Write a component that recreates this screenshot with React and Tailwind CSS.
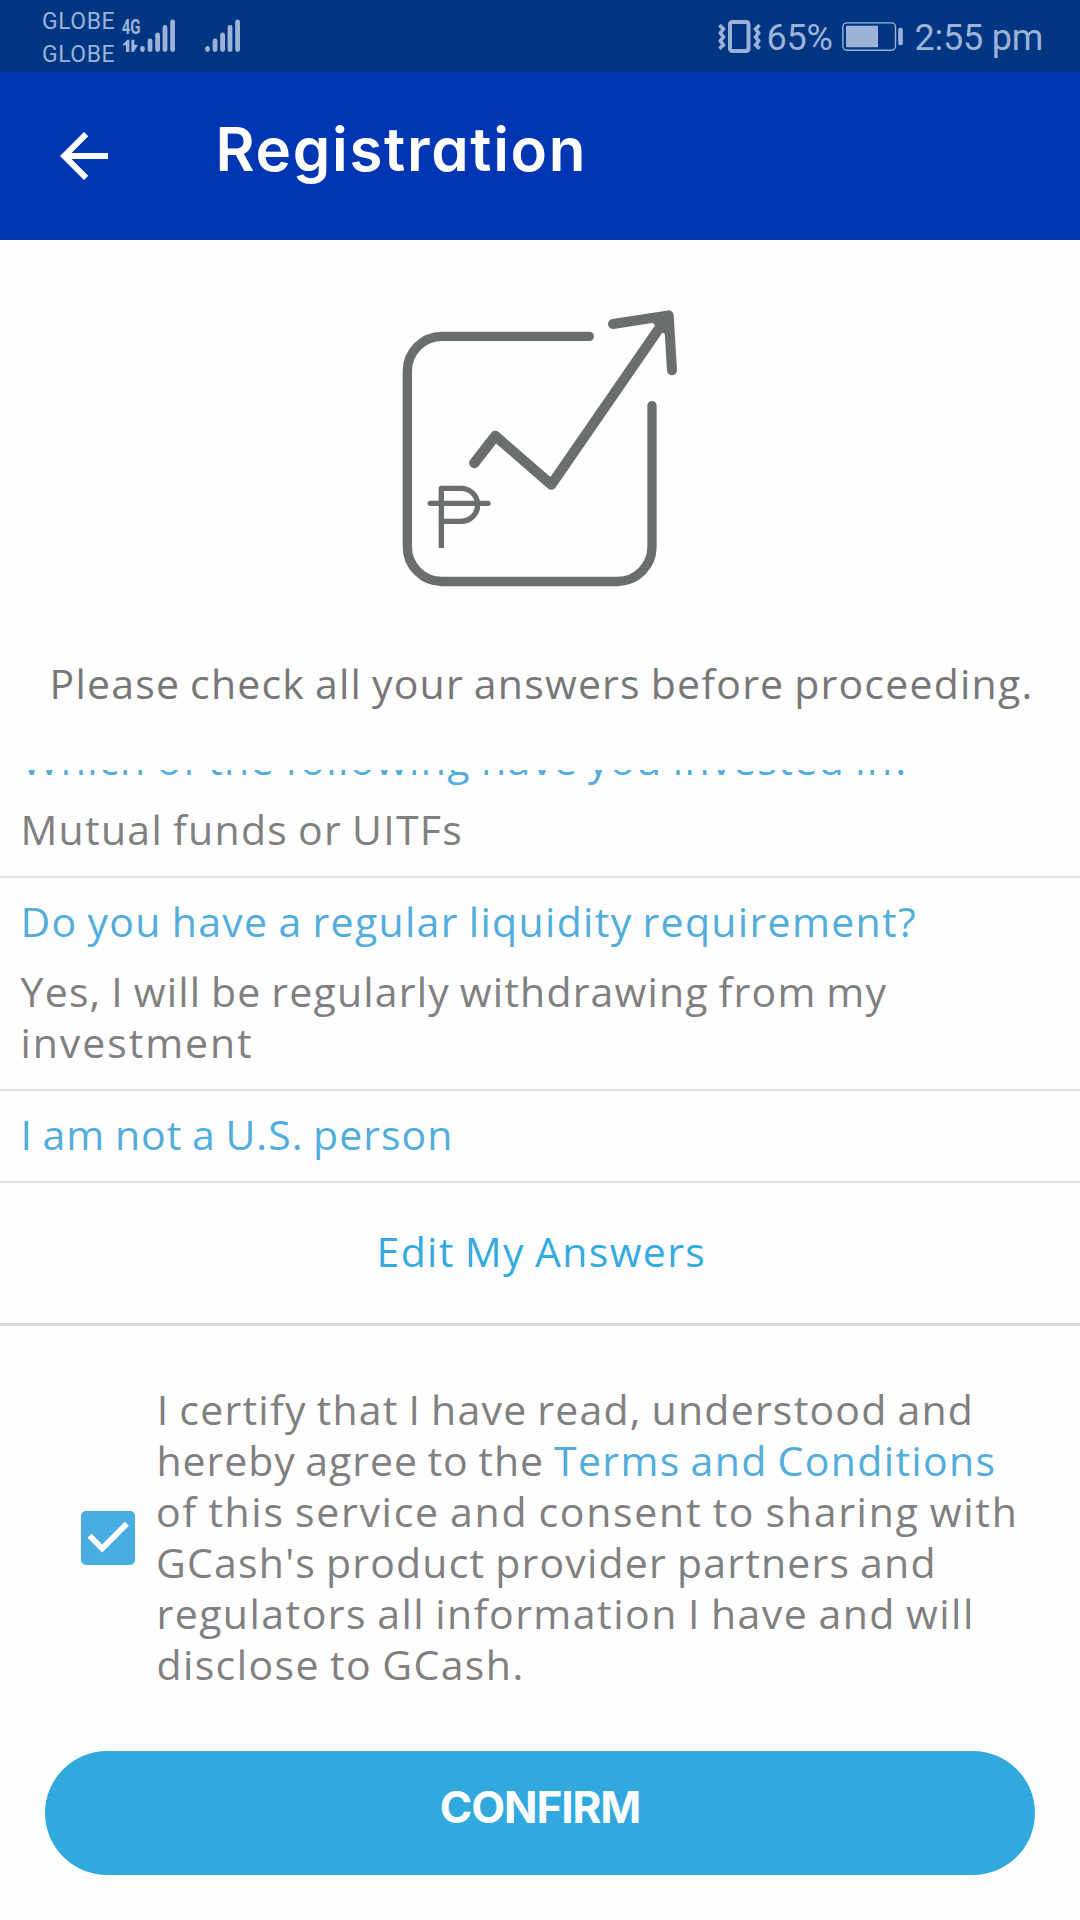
const body = "font-['Open_Sans',sans-serif] text-[41px] leading-[51px] whitespace-nowrap [word-spacing:-2px]";

function SignalBars({ className }) {
  return (
    <svg className={className} width="35" height="34" viewBox="0 0 35 34" fill="none" stroke="#9cb3d7" strokeWidth="4.8" strokeLinecap="round">
      <path d="M2.5 29.4V30.6M10 21.9V30.6M17.6 15.9V30.6M25 8.4V30.6M32.6 2.9V30.6" />
    </svg>
  );
}

function NetworkType() {
  return (
    <svg className="overflow-visible" width="19" height="34" viewBox="0 0 19 34" fill="#9cb3d7">
      <text x="-0.3" y="14.6" fontFamily="Roboto, sans-serif" fontWeight="700" fontSize="20" textLength="18.8" lengthAdjust="spacingAndGlyphs">4G</text>
      <path d="M0 26.3L5.4 20.8H7.4V33H4V26.3Z" />
      <path d="M9.4 20.8H12.4V26H16L11.6 33H9.4Z" />
    </svg>
  );
}

function StatusBar() {
  return (
    <div className="flex h-[72px] bg-[#003581] font-['Roboto',sans-serif] text-[#9cb3d7]">
      <div className="ml-[42px] mt-[5px] w-[80px] text-[23px] leading-[33px] tracking-[0.5px]">
        <div>GLOBE</div>
        <div>GLOBE</div>
      </div>
      <div className="mt-[19px] flex items-start">
        <NetworkType />
        <SignalBars className="-ml-px" />
        <SignalBars className="ml-[30px]" />
      </div>
      <div className="ml-auto mr-[36px] mt-[17px] flex items-start text-[36px] leading-[42px] tracking-[-0.22px] whitespace-nowrap">
        <svg className="mr-[6px] mt-[3px]" width="43" height="34" viewBox="0 0 43 34" fill="none" stroke="#9cb3d7" strokeWidth="4">
          <rect x="12" y="2" width="18.5" height="29" rx="2.2" />
          <path strokeWidth="3.6" d="M1.4 5L5.4 9L2.4 13L5.4 17L2.4 21L5.4 25L1.4 28.6M41.6 5L37.6 9L40.6 13L37.6 17L40.6 21L37.6 25L41.6 28.6" />
        </svg>
        <span className="w-[75.5px]">65%</span>
        <svg className="mr-[11.5px] mt-[5px]" width="61" height="30" viewBox="0 0 61 30" fill="#9cb3d7">
          <rect x="0.9" y="0.9" width="52.6" height="27.4" rx="4" fill="none" stroke="#9cb3d7" strokeWidth="1.4" />
          <rect x="4" y="3.8" width="32" height="21.4" rx="1" />
          <rect x="56.2" y="5.8" width="4.6" height="17.4" rx="2" />
        </svg>
        <span className="w-[129.5px]">2:55 pm</span>
      </div>
    </div>
  );
}

function Header() {
  return (
    <header className="flex h-[168px] bg-[#0036b3] text-white">
      <svg className="ml-[48px] mt-[48px]" width="72" height="72" viewBox="0 0 24 24" fill="currentColor">
        <path d="M20 11H7.83l5.59-5.59L12 4l-8 8 8 8 1.41-1.41L7.83 13H20v-2z" />
      </svg>
      <h1 className="ml-[95.5px] mt-[47px] font-['Inter',sans-serif] text-[60px] font-semibold leading-[60px] tracking-[1.7px] [font-feature-settings:'cv11']">
        Registration
      </h1>
    </header>
  );
}

function GrowthIcon() {
  return (
    <svg width="320" height="320" viewBox="0 0 960 960" fill="none" stroke="#6a6e6d" strokeWidth="28" strokeLinecap="round" strokeLinejoin="round">
      <path d="M628 139H186A104 104 0 0 0 82 243V770A104 104 0 0 0 186 874.500H712A104 104 0 0 0 816 770V347" />
      <path strokeWidth="31" d="M283 519L346 438L514 584L852 94" />
      <path strokeWidth="30" d="M699 102L866 76L876 241" />
      <path fill="#6a6e6d" stroke="none" d="M815 96L866 76L870 135L850 130Z" />
      <path strokeWidth="16" strokeLinecap="butt" d="M184 774V595H243A50 49.500 0 0 1 243 694H184" />
      <path strokeWidth="16" d="M151 640H324" />
    </svg>
  );
}

function Item({ children }) {
  return <div className="border-b-2 border-[#e3e3e3] pb-[21px] pt-[18px]">{children}</div>;
}

export default function App() {
  return (
    <div className="flex h-[1920px] w-[1080px] flex-col overflow-hidden bg-[#fefefe]">
      <StatusBar />
      <Header />

      <div className="flex h-[418px] justify-start pl-[380px] pt-[50px]">
        <GrowthIcon />
      </div>
      <p className={`${body} h-[112px] pl-[49.5px] tracking-[1.215px] text-[#777777]`}>
        Please check all your answers before proceeding.
      </p>

      <div className="h-[413px] shrink-0 overflow-hidden text-[#808080]">
        <div className="-mt-[54px]">
          <Item>
            <p className={`${body} pl-[21.5px] tracking-[1.4px] text-[#52acdc]`}>Which of the following have you invested in?</p>
            <p className={`${body} mt-[19px] pl-[20.4px] tracking-[1.293px]`}>Mutual funds or UITFs</p>
          </Item>
          <Item>
            <p className={`${body} pl-[20.4px] tracking-[1.322px] text-[#52acdc]`}>Do you have a regular liquidity requirement?</p>
            <div className={`${body} mt-[19px]`}>
              <p className="pl-[20.6px] tracking-[1.18px]">Yes, I will be regularly withdrawing from my</p>
              <p className="pl-[20.4px] tracking-[1.94px]">investment</p>
            </div>
          </Item>
          <Item>
            <p className={`${body} pl-[20.4px] tracking-[1.008px] text-[#52acdc]`}>I am not a U.S. person</p>
          </Item>
        </div>
      </div>

      <div className="h-[143px] shrink-0 border-b-[3px] border-[#d9dbda] pt-[43px]">
        <button className={`${body} ml-[376.5px] block tracking-[1.366px] text-[#35aadf]`}>Edit My Answers</button>
      </div>

      <div className="flex h-[425px] shrink-0 pl-[81px] pt-[58px] text-[#808080]">
        <div className="mt-[127px] size-[54px] rounded-[5px] bg-[#48aee1]">
          <svg width="54" height="54" viewBox="0 0 54 54" fill="none" stroke="#ffffff" strokeWidth="5.8">
            <path d="M8.500 24.800L21.200 37.500L45.800 12.800" />
          </svg>
        </div>
        <div className={`${body} ml-[21px]`}>
          <p className="pl-[0.8px] tracking-[1.229px]">I certify that I have read, understood and</p>
          <p className="flex">
            <span className="w-[398px] pl-[0.4px] tracking-[0.957px]">hereby agree to the</span>
            <a className="tracking-[1.344px] text-[#52acdc]">Terms and Conditions</a>
          </p>
          <p className="tracking-[1.7px]">of this service and consent to sharing with</p>
          <p className="tracking-[1.205px]">GCash's product provider partners and</p>
          <p className="pl-[0.4px] tracking-[1.48px]">regulators all information I have and will</p>
          <p className="pl-[0.4px] tracking-[1.42px]">disclose to GCash.</p>
        </div>
      </div>

      <button className="ml-[45px] flex h-[124px] w-[990px] shrink-0 justify-center rounded-full bg-[#31a9df] pt-[31px] font-['Inter',sans-serif] text-[44px] font-bold leading-[50px] tracking-[-1.1px] text-white">
        CONFIRM
      </button>
    </div>
  );
}
